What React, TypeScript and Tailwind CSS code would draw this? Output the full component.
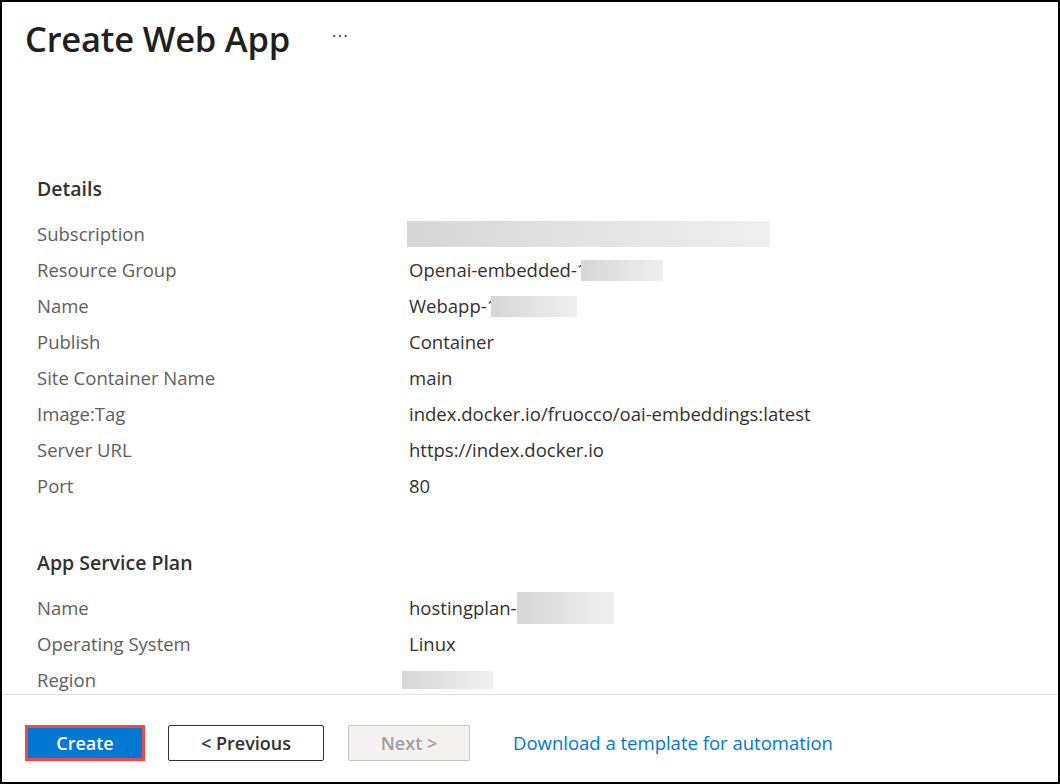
import React from "react";

type Row = {
  label: string;
  value?: string;
  blur?: { w: number; h: number; ml: number };
};

const details: Row[] = [
  { label: "Subscription", blur: { w: 363, h: 26, ml: -2 } },
  { label: "Resource Group", value: "Openai-embedded-1", blur: { w: 82, h: 21, ml: -6 } },
  { label: "Name", value: "Webapp-1", blur: { w: 86, h: 21, ml: -6 } },
  { label: "Publish", value: "Container" },
  { label: "Site Container Name", value: "main" },
  { label: "Image:Tag", value: "index.docker.io/fruocco/oai-embeddings:latest" },
  { label: "Server URL", value: "https://index.docker.io" },
  { label: "Port", value: "80" },
];

const plan: Row[] = [
  { label: "Name", value: "hostingplan-", blur: { w: 97, h: 32, ml: 0 } },
  { label: "Operating System", value: "Linux" },
  { label: "Region", blur: { w: 91, h: 18, ml: -7 } },
];

const Blur = ({ w, h, ml }: { w: number; h: number; ml: number }) => (
  <span
    className="inline-block align-middle bg-gradient-to-r from-[#d6d6d6] via-[#e3e3e3] to-[#efefef]"
    style={{ width: w, height: h, marginLeft: ml }}
  />
);

const Section = ({ title, rows }: { title: string; rows: Row[] }) => (
  <section>
    <h2 className="text-[19.5px] leading-[36px] font-semibold text-[#323130] mb-[9px]">{title}</h2>
    {rows.map((row, i) => (
      <div key={i} className="flex h-[36px] items-center text-[18.5px]">
        <div className="w-[372px] shrink-0 text-[#605e5c]">{row.label}</div>
        <div className="flex items-center text-[#323130] whitespace-nowrap">
          {row.value && <span>{row.value}</span>}
          {row.blur && <Blur {...row.blur} />}
        </div>
      </div>
    ))}
  </section>
);

export default function App() {
  return (
    <div className="w-[1060px] h-[784px] border-2 border-black bg-white flex flex-col font-['Open_Sans',sans-serif] overflow-hidden">
      {/* Scrollable body */}
      <div className="flex-1 overflow-hidden">
        <div className="flex items-center h-[44px] mt-[15px] pl-[23px]">
          <h1 className="text-[34.5px] font-semibold text-[#201f1e] tracking-[-0.2px]">Create Web App</h1>
          <span className="ml-[42px] text-[16px] text-[#323130] tracking-[1.5px] -mt-[6px]">···</span>
        </div>

        <div className="pl-[35px] mt-[110px]">
          <Section title="Details" rows={details} />
          <div className="h-[41px]" />
          <Section title="App Service Plan" rows={plan} />
        </div>
      </div>

      {/* Footer */}
      <div className="h-[88px] shrink-0 border-t border-[#e1dfdd] pt-[30px] pl-[23px] flex items-start">
        <div className="border-[3px] border-[#ea4a4a] w-[120px] h-[36px] flex">
          <button className="flex-1 bg-[#0078d4] text-white text-[18px] font-semibold leading-none">
            Create
          </button>
        </div>
        <button className="ml-[23px] w-[156px] h-[36px] border border-[#323130] rounded-[2px] text-[18px] font-semibold text-[#323130]">
          &lt; Previous
        </button>
        <button className="ml-[24px] w-[122px] h-[36px] border border-[#c8c6c4] bg-[#f3f2f1] rounded-[2px] text-[18px] font-semibold text-[#a19f9d]">
          Next &gt;
        </button>
        <a className="ml-[43px] h-[36px] flex items-center text-[18.5px] text-[#0078d4]" href="#">
          Download a template for automation
        </a>
      </div>
    </div>
  );
}
